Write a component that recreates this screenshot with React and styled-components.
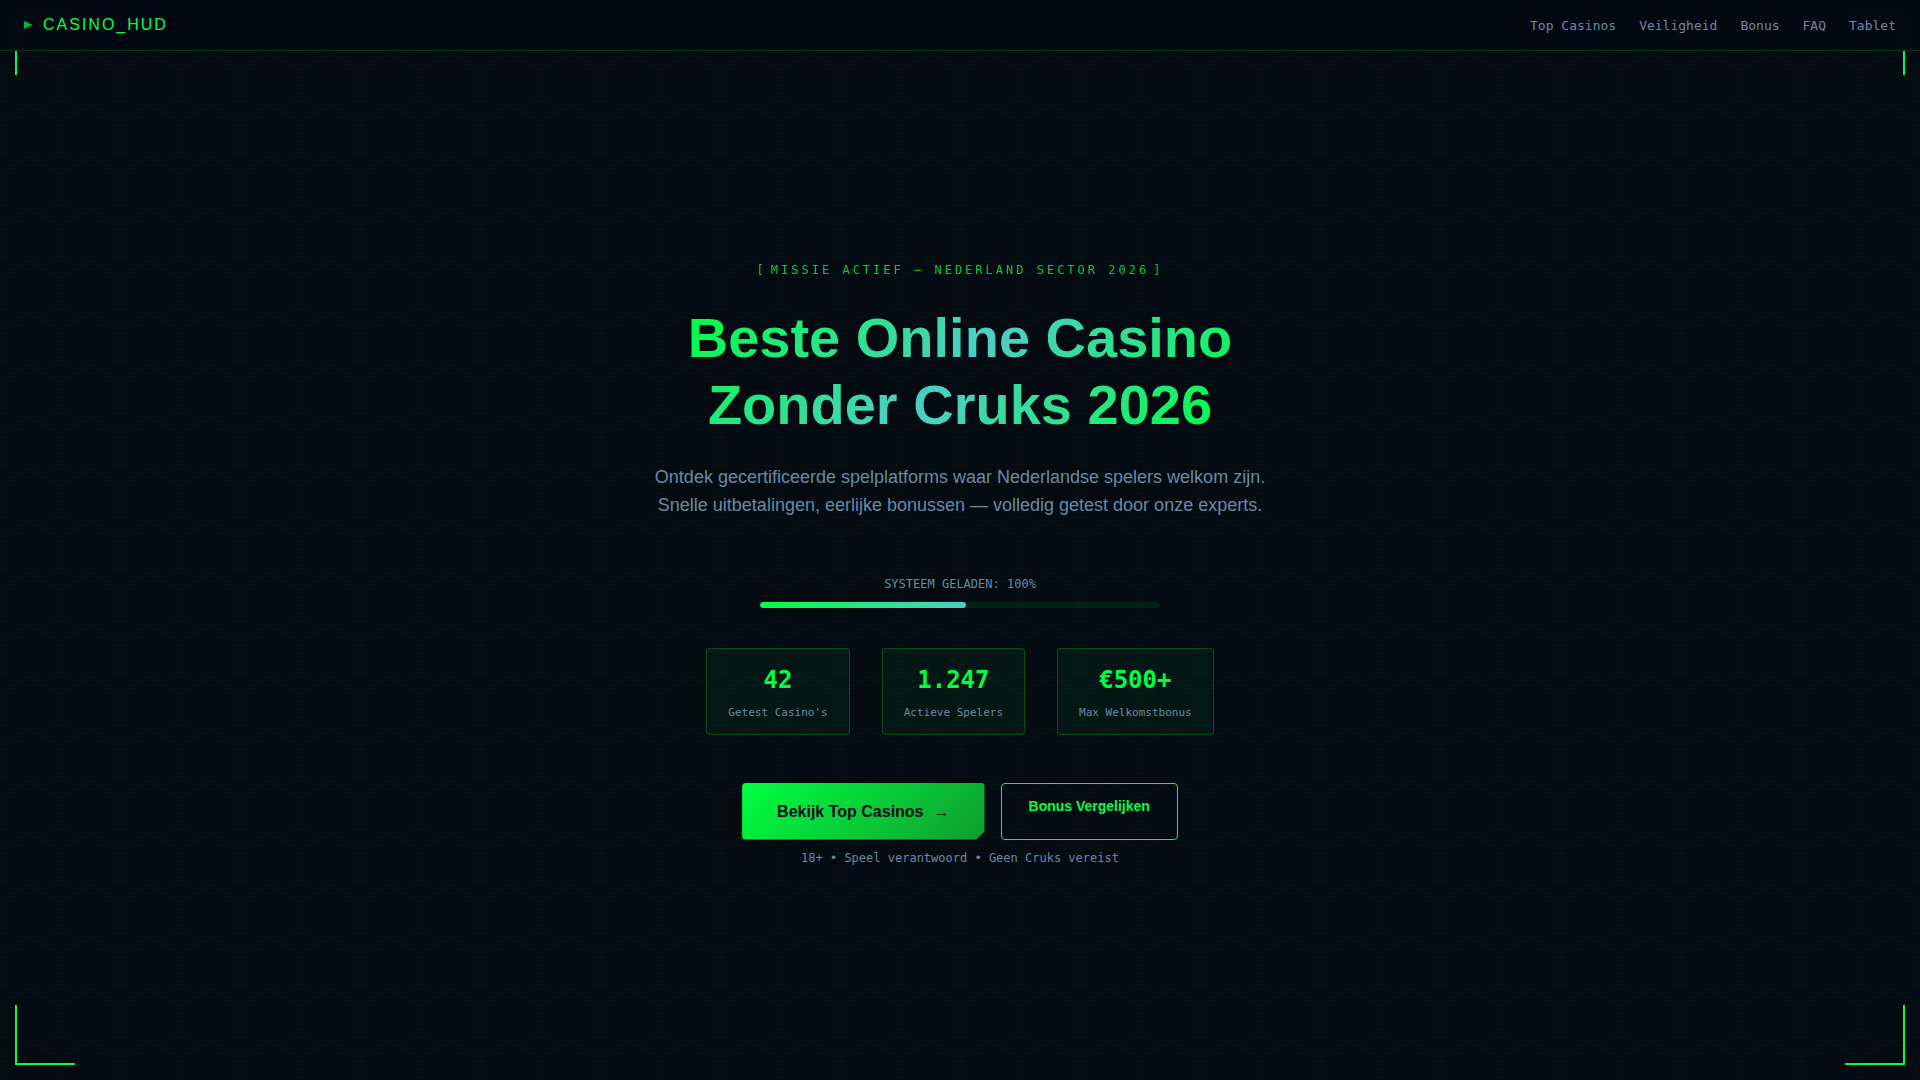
import React from 'react';
import styled, { createGlobalStyle } from 'styled-components';

const GlobalStyle = createGlobalStyle`
  * {
    box-sizing: border-box;
    margin: 0;
    padding: 0;
  }

  body {
    background: #040912;
    color: #6b8ba4;
    font-family: 'Liberation Sans', Arial, sans-serif;
  }
`;

const mono = `'DejaVu Sans Mono', monospace`;

const Page = styled.div`
  position: relative;
  min-height: 100vh;
  display: flex;
  flex-direction: column;
  background: #040912;
`;

const Header = styled.header`
  position: relative;
  z-index: 3;
  display: flex;
  align-items: center;
  justify-content: space-between;
  height: 51px;
  padding: 0 24px;
  background: rgba(4, 8, 18, 0.98);
  border-bottom: 1px solid rgba(0, 255, 65, 0.2);
`;

const Logo = styled.a`
  display: flex;
  align-items: center;
  gap: 10px;
  color: #00ff41;
  font-size: 16px;
  line-height: 24px;
  letter-spacing: 2px;
  text-decoration: none;

  svg {
    opacity: 0.7;
  }
`;

const Nav = styled.nav`
  display: flex;
  gap: 23px;
  padding-top: 2px;
`;

const NavLink = styled.a`
  color: #6b8ba4;
  font-family: ${mono};
  font-size: 13px;
  line-height: 20px;
  text-decoration: none;

  &:hover {
    color: #00ff41;
  }
`;

// background layers, stretched over the whole page
const HexGrid = styled.svg`
  position: absolute;
  inset: 0;
  width: 100%;
  height: 100%;
`;

const Scanlines = styled.div`
  position: absolute;
  inset: 0;
  pointer-events: none;
  background: repeating-linear-gradient(
    0deg,
    transparent,
    transparent 2px,
    rgba(0, 255, 65, 0.015) 2px,
    rgba(0, 255, 65, 0.015) 4px
  );
`;

const Corner = styled.span`
  position: absolute;
  z-index: 2;
  width: 60px;
  height: 60px;
  border: 0 solid #00ff41;
  ${props => props.$y}: 15px;
  ${props => props.$x}: 15px;
  border-${props => props.$y}-width: 2px;
  border-${props => props.$x}-width: 2px;
`;

const Hero = styled.main`
  position: relative;
  z-index: 1;
  flex: 1;
  display: flex;
  flex-direction: column;
  align-items: center;
  justify-content: center;
  padding: 40px 24px 44px;
  text-align: center;
`;

const Tag = styled.p`
  display: flex;
  gap: 4px;
  margin-bottom: 24px;
  color: #00ff41;
  font-family: ${mono};
  font-size: 12px;
  line-height: 20px;
  letter-spacing: 3px;
  opacity: 0.8;

  &::before {
    content: '[';
  }

  &::after {
    content: ']';
  }
`;

const Title = styled.h1`
  margin-bottom: 25px;
  font-size: 56px;
  font-weight: 700;
  line-height: 67px;
  background: linear-gradient(135deg, #00ff41 0%, #4ecdc4 50%, #00ff41 100%);
  background-clip: text;
  color: transparent;
`;

const Lead = styled.p`
  margin-bottom: 55px;
  color: #6b8ba4;
  font-size: 18px;
  line-height: 28px;
`;

const Loader = styled.div`
  display: flex;
  flex-direction: column;
  gap: 8px;
  width: 400px;
  max-width: 100%;
  margin-bottom: 40px;
`;

const LoaderLabel = styled.span`
  color: #6b8ba4;
  font-family: ${mono};
  font-size: 12px;
  line-height: 20px;
`;

const Track = styled.div`
  height: 6px;
  border-radius: 3px;
  background: rgba(0, 255, 65, 0.1);
  overflow: hidden;
`;

const Fill = styled.div`
  height: 100%;
  border-radius: 3px;
  background: linear-gradient(90deg, #00ff41, #4ecdc4);
`;

const Stats = styled.div`
  display: flex;
  flex-wrap: wrap;
  justify-content: center;
  gap: 32px;
  margin-bottom: 48px;
`;

const Stat = styled.div`
  display: flex;
  flex-direction: column;
  padding: 12px 21px 11px;
  background: rgba(0, 255, 65, 0.05);
  border: 1px solid rgba(0, 255, 65, 0.25);
  border-radius: 4px;
  font-family: ${mono};
`;

const StatValue = styled.strong`
  color: #00ff41;
  font-size: 24px;
  line-height: 38px;
`;

const StatLabel = styled.span`
  margin-top: 4px;
  color: #6b8ba4;
  font-size: 11px;
  line-height: 20px;
`;

const Actions = styled.div`
  display: flex;
  flex-wrap: wrap;
  justify-content: center;
  gap: 16px;
`;

const Primary = styled.a`
  display: flex;
  align-items: center;
  gap: 10px;
  padding: 16px 35px;
  border-radius: 4px;
  background: linear-gradient(135deg, #00ff41, #0f9d2e);
  clip-path: polygon(0 0, 100% 0, 100% calc(100% - 8px), calc(100% - 8px) 100%, 0 100%);
  color: #050a14;
  font-size: 16px;
  font-weight: 700;
  line-height: 25px;
  text-decoration: none;
`;

const Secondary = styled.a`
  padding: 11px 27px;
  border: 1px solid #00ff41;
  border-radius: 4px;
  color: #00ff41;
  font-size: 14px;
  font-weight: 700;
  line-height: 22px;
  text-decoration: none;
`;

const Note = styled.p`
  margin-top: 8px;
  color: #6b8ba4;
  font-family: ${mono};
  font-size: 12px;
  line-height: 20px;
`;

const links = ['Top Casinos', 'Veiligheid', 'Bonus', 'FAQ', 'Tablet'];

const stats = [
  { value: '42', label: "Getest Casino's" },
  { value: '1.247', label: 'Actieve Spelers' },
  { value: '€500+', label: 'Max Welkomstbonus' },
];

const loaded = 51.5;

function App() {
  return (
    <Page>
      <GlobalStyle />
      <HexGrid aria-hidden="true">
        <defs>
          <pattern id="hex" width="60" height="52" patternUnits="userSpaceOnUse">
            <path d="M30 1L58 17V49L30 65L2 49V17Z" fill="none" stroke="#00ff41" strokeOpacity="0.03" />
          </pattern>
        </defs>
        <rect width="100%" height="100%" fill="url(#hex)" />
      </HexGrid>
      <Scanlines />
      <Corner $y="top" $x="left" />
      <Corner $y="top" $x="right" />
      <Corner $y="bottom" $x="left" />
      <Corner $y="bottom" $x="right" />

      <Header>
        <Logo href="#top">
          <svg width="9" height="10" viewBox="0 0 9 10" aria-hidden="true">
            <path d="M0 1L9 5L0 9Z" fill="#00ff41" />
          </svg>
          CASINO_HUD
        </Logo>
        <Nav>
          {links.map(link => (
            <NavLink key={link} href={`#${link.toLowerCase().replace(' ', '-')}`}>{link}</NavLink>
          ))}
        </Nav>
      </Header>

      <Hero id="top">
        <Tag>MISSIE ACTIEF — NEDERLAND SECTOR 2026</Tag>
        <Title>Beste Online Casino<br />Zonder Cruks 2026</Title>
        <Lead>
          Ontdek gecertificeerde spelplatforms waar Nederlandse spelers welkom zijn.
          <br />
          Snelle uitbetalingen, eerlijke bonussen — volledig getest door onze experts.
        </Lead>
        <Loader>
          <LoaderLabel>SYSTEEM GELADEN: 100%</LoaderLabel>
          <Track>
            <Fill style={{ width: `${loaded}%` }} />
          </Track>
        </Loader>
        <Stats>
          {stats.map(stat => (
            <Stat key={stat.label}>
              <StatValue>{stat.value}</StatValue>
              <StatLabel>{stat.label}</StatLabel>
            </Stat>
          ))}
        </Stats>
        <Actions>
          <Primary href="#top-casinos">
            Bekijk Top Casinos <span>→</span>
          </Primary>
          <Secondary href="#bonus">Bonus Vergelijken</Secondary>
        </Actions>
        <Note>18+ • Speel verantwoord • Geen Cruks vereist</Note>
      </Hero>
    </Page>
  );
}

export default App;
